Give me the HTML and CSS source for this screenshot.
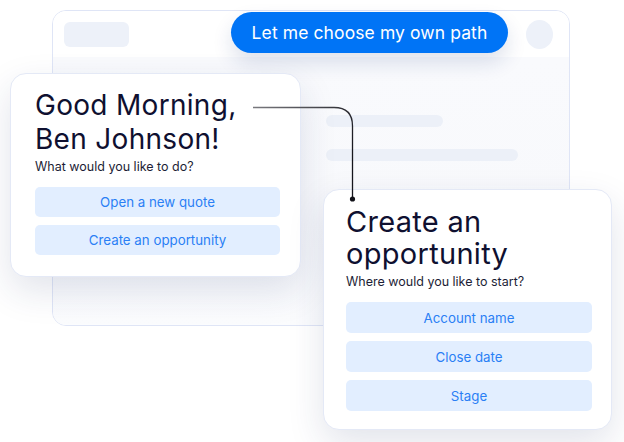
FILE: index.html
```html
<!DOCTYPE html>
<html lang="en">
<head>
<meta charset="utf-8">
<title>Assistant</title>
<link rel="stylesheet" href="styles.css">
</head>
<body>
<div class="stage">
  <div class="window">
    <div class="window-head">
      <span class="ph-logo"></span>
      <span class="ph-avatar"></span>
    </div>
    <div class="window-body">
      <span class="ph-bar short"></span>
      <span class="ph-bar long"></span>
    </div>
  </div>

  <button class="pill">Let me choose my own path</button>

  <section class="card card-greet">
    <h1 class="card-title">Good Morning,<br>Ben Johnson!</h1>
    <p class="card-sub">What would you like to do?</p>
    <div class="options">
      <button class="option">Open a new quote</button>
      <button class="option">Create an opportunity</button>
    </div>
  </section>

  <section class="card card-opp">
    <h2 class="card-title">Create an<br>opportunity</h2>
    <p class="card-sub">Where would you like to start?</p>
    <div class="options">
      <button class="option">Account name</button>
      <button class="option">Close date</button>
      <button class="option">Stage</button>
    </div>
  </section>

  <svg class="connector" width="624" height="442" viewBox="0 0 624 442">
    <defs>
      <linearGradient id="wire" gradientUnits="userSpaceOnUse" x1="253" y1="107" x2="352" y2="160">
        <stop offset="0" stop-color="#7a7a7f"/>
        <stop offset="1" stop-color="#15151c"/>
      </linearGradient>
    </defs>
    <path d="M253 107.5 H334 Q352.5 107.5 352.5 126 V199" fill="none" stroke="url(#wire)" stroke-width="1.3"/>
    <circle cx="352.5" cy="199" r="2.6" fill="#111118"/>
  </svg>
</div>
</body>
</html>
```

FILE: styles.css
```css
* {
  box-sizing: border-box;
}

html,
body {
  margin: 0;
  padding: 0;
  background: #ffffff;
}

body {
  font-family: Inter, "Noto Sans", "Open Sans", sans-serif;
  color: #10112e;
}

.stage {
  position: relative;
  width: 624px;
  height: 442px;
  overflow: hidden;
}

/* Background app window */
.window {
  position: absolute;
  left: 52px;
  top: 10px;
  width: 518px;
  height: 316px;
  border: 1px solid #dfe5f6;
  border-radius: 14px;
  background: #ffffff;
  overflow: hidden;
  display: flex;
  flex-direction: column;
}

.window-head {
  height: 46px;
  display: flex;
  align-items: flex-start;
  justify-content: space-between;
  padding: 11px 16px 0 11px;
  background: #ffffff;
}

.ph-logo {
  width: 65px;
  height: 25px;
  border-radius: 6px;
  background: #edf1f9;
}

.ph-avatar {
  width: 27px;
  height: 29px;
  margin-top: -2px;
  border-radius: 50%;
  background: #edf1f9;
}

.window-body {
  flex: 1;
  display: flex;
  flex-direction: column;
  gap: 22px;
  padding: 58px 0 0 273px;
  background: linear-gradient(180deg, #f9fafd 0%, #f8f9fc 60%, #fbfcfe 100%);
}

.ph-bar {
  height: 12px;
  border-radius: 6px;
  background: #ecf0f8;
}

.ph-bar.short {
  width: 117px;
}

.ph-bar.long {
  width: 192px;
}

/* Call to action */
.pill {
  position: absolute;
  left: 231px;
  top: 12px;
  width: 277px;
  height: 41px;
  border: 0;
  border-radius: 21px;
  background: #0074f6;
  color: #ffffff;
  font-family: inherit;
  font-size: 17.5px;
  font-weight: 400;
  letter-spacing: 0.1px;
  box-shadow: 0 10px 20px rgba(20, 50, 120, 0.14);
  padding: 0;
}

/* Floating dialog cards */
.card {
  position: absolute;
  background: #ffffff;
  border: 1px solid #e4e9f6;
  border-radius: 16px;
  box-shadow: 0 14px 36px rgba(30, 45, 100, 0.13);
  display: flex;
  flex-direction: column;
}

.card-greet {
  left: 10px;
  top: 73px;
  width: 291px;
  height: 204px;
  padding: 14px 20px 0 24px;
}

.card-opp {
  left: 323px;
  top: 189px;
  width: 289px;
  height: 241px;
  padding: 16px 19px 0 22px;
}

.card-title {
  margin: 0;
  font-size: 28px;
  font-weight: 400;
  line-height: 34px;
  color: #0f1030;
  letter-spacing: 0.3px;
}

.card-opp .card-title {
  font-size: 29px;
  line-height: 32px;
}

.card-sub {
  margin: 2px 0 0;
  font-size: 12.5px;
  line-height: 18px;
  color: #1d1e36;
}

.card-opp .card-sub {
  margin-top: 3px;
}

.options {
  display: flex;
  flex-direction: column;
  gap: 8px;
  margin-top: 11px;
}

.option {
  height: 30px;
  border: 0;
  border-radius: 5px;
  background: #e2eeff;
  color: #2a7ff5;
  font-family: inherit;
  font-size: 13.3px;
  font-weight: 400;
  padding: 0;
}

.card-opp .option {
  height: 31px;
}

.connector {
  position: absolute;
  left: 0;
  top: 0;
  pointer-events: none;
}
```
